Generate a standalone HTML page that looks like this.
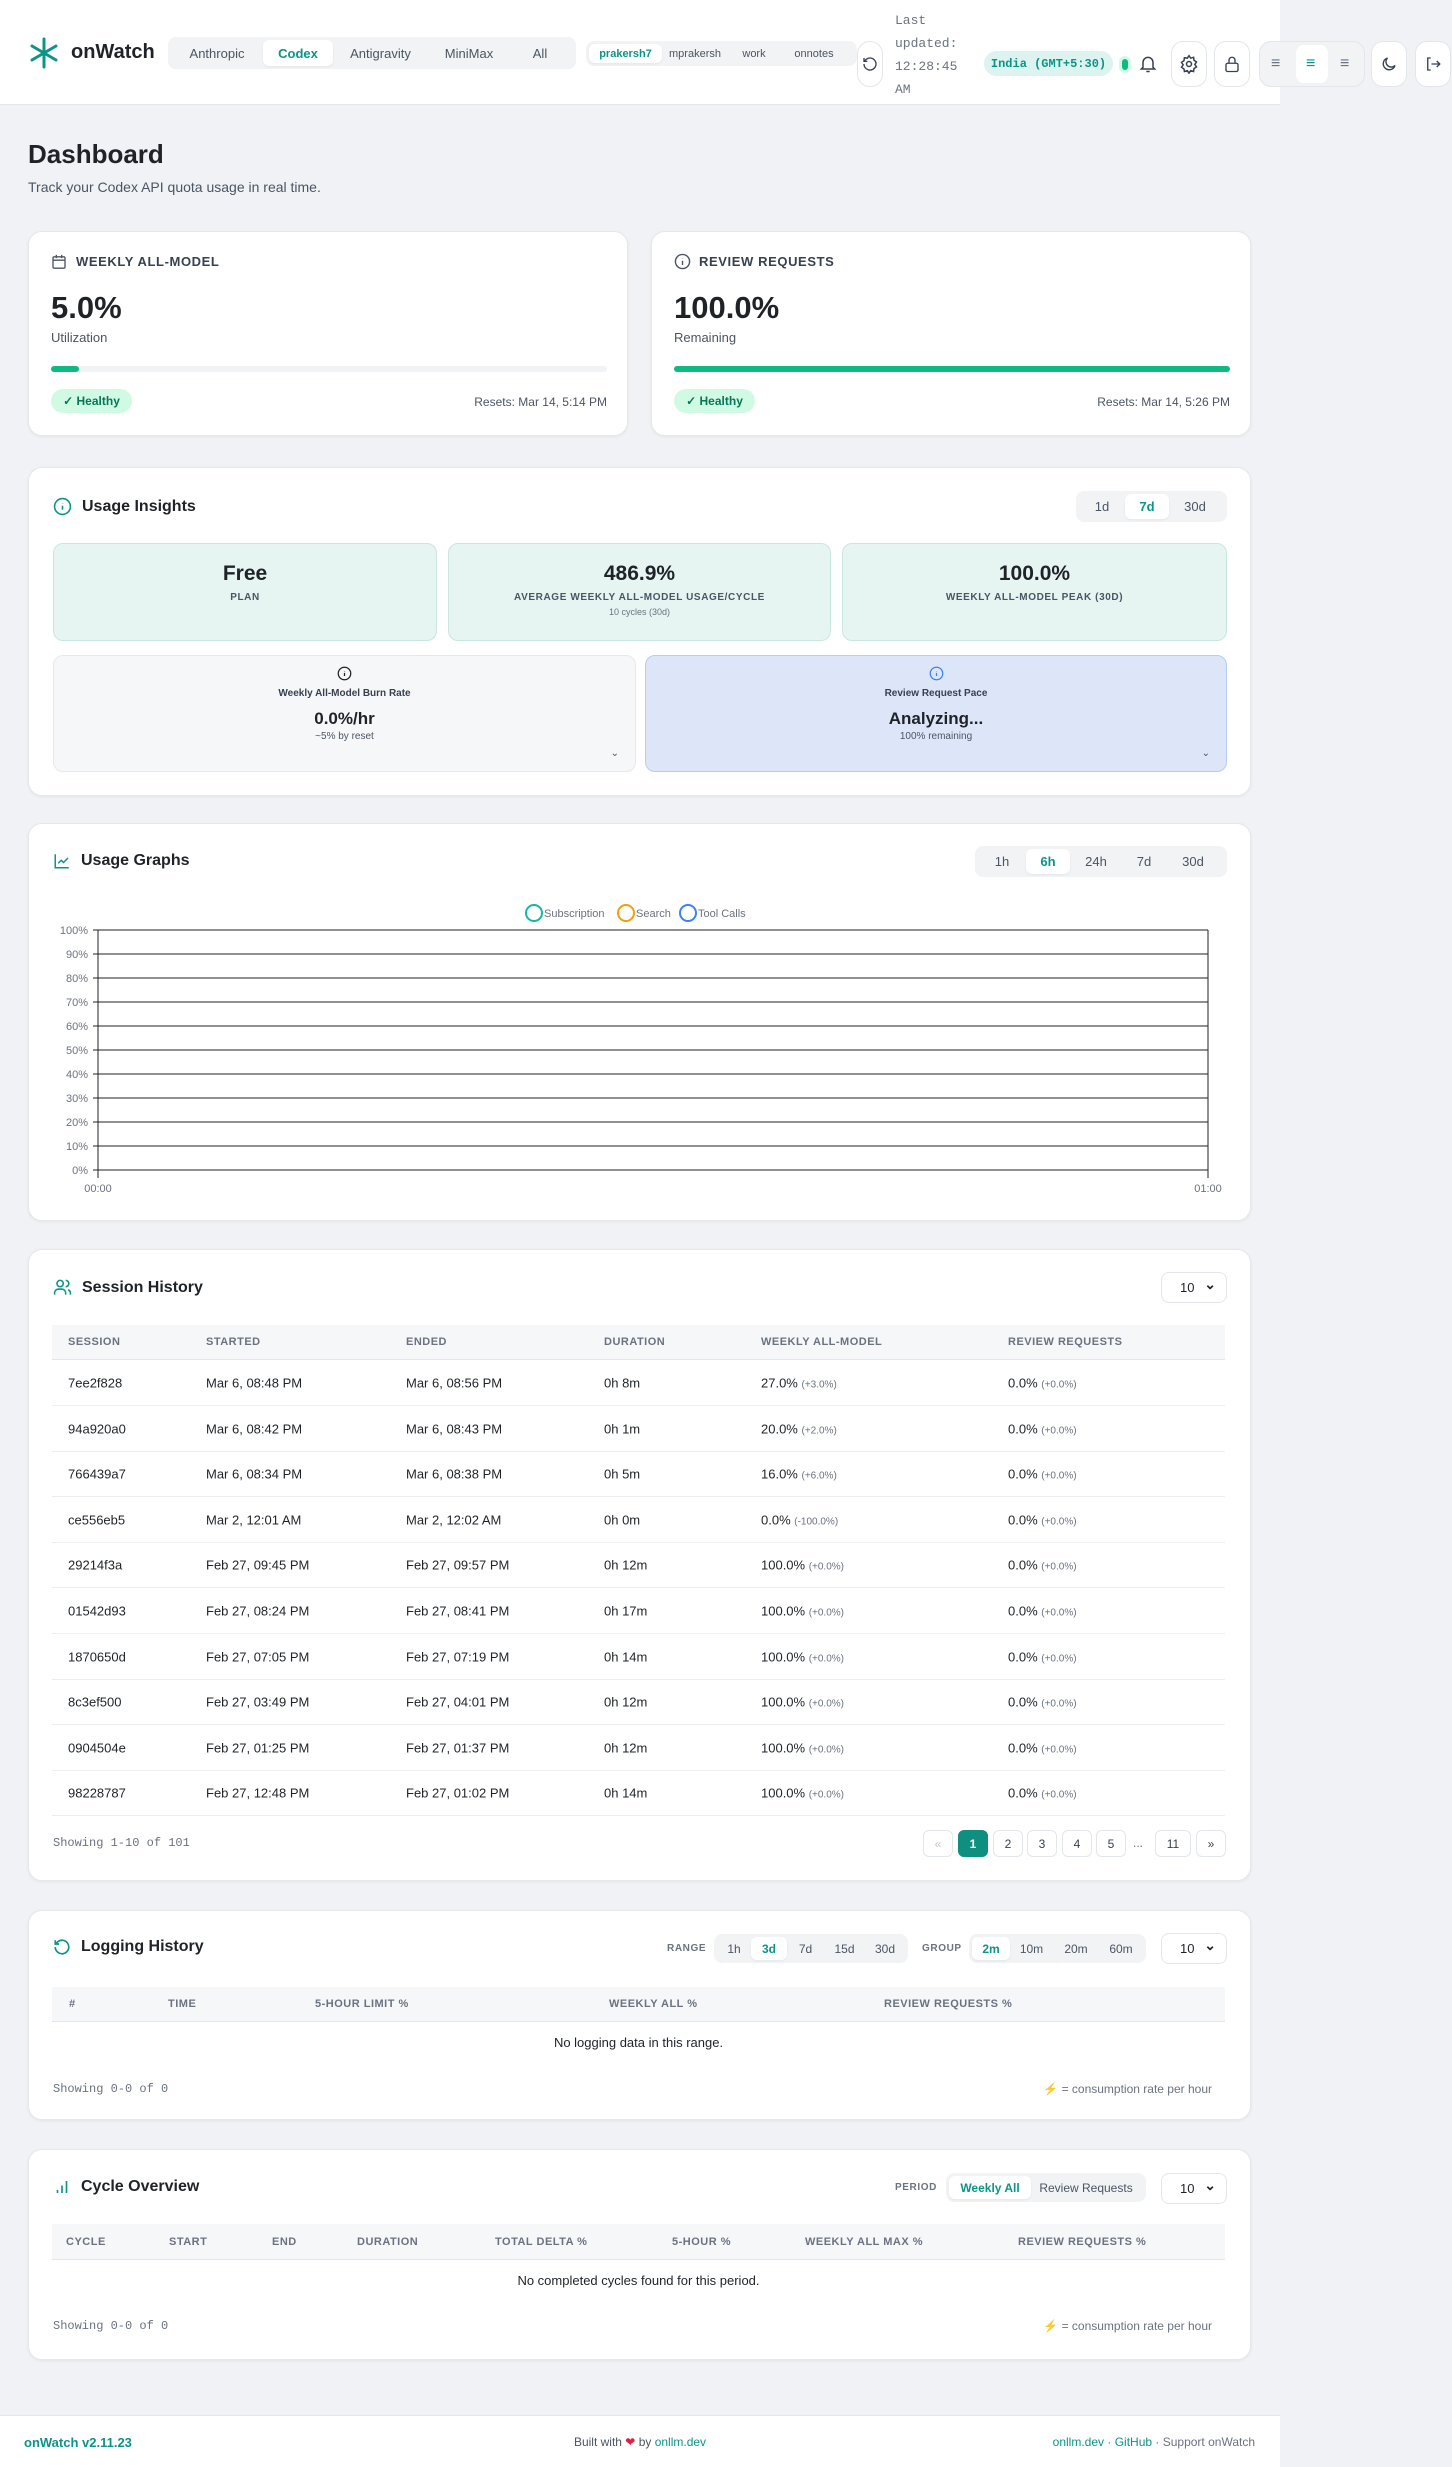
<!DOCTYPE html>
<html><head><meta charset="utf-8">
<style>
*{box-sizing:border-box;margin:0;padding:0}
html,body{width:1452px;height:2467px;background:#f0f2f5;font-family:"Liberation Sans",sans-serif;color:#1f2328;overflow:hidden}
.a{position:absolute}
.hdr{position:absolute;left:0;top:0;width:1280px;height:105px;background:#fff;border-bottom:1px solid #e3e6ea}
.card{position:absolute;background:#fff;border:1px solid #e6e8eb;border-radius:14px;box-shadow:0 1px 3px rgba(0,0,0,.06)}
.seg{position:absolute;background:#f1f3f5;border-radius:8px;display:flex;align-items:center;padding:3px;gap:0}
.seg span{display:flex;align-items:center;justify-content:center;height:100%;border-radius:6px;color:#4b5563;font-size:13px}
.seg span.on{background:#fff;color:#0d9488;font-weight:bold;box-shadow:0 1px 2px rgba(0,0,0,.06)}
.ib{position:absolute;top:41px;height:46px;width:36px;border:1px solid #e3e6ea;border-radius:12px;background:#fff;display:flex;align-items:center;justify-content:center}
.ctitle{position:absolute;font-size:16px;font-weight:bold;color:#1f2328;display:flex;align-items:center;gap:10px}
.th{position:absolute;background:#f6f7f9;border-bottom:1px solid #e3e6ea;font-size:11px;font-weight:bold;color:#6b7280;letter-spacing:.5px}
.th span{position:absolute;top:50%;transform:translateY(-50%)}
.row{position:absolute;left:52px;width:1173px;height:46px;border-bottom:1px solid #eceef1;font-size:13px;color:#1f2328}
.row span{position:absolute;top:50%;transform:translateY(-50%)}
.row small{font-size:10px;color:#6b7280}
.pg{position:absolute;top:1830px;height:27px;border:1px solid #e3e6ea;border-radius:6px;background:#fff;font-size:12px;display:flex;align-items:center;justify-content:center;color:#374151}
.mono{font-family:"Liberation Mono",monospace}
.sel{position:absolute;width:66px;height:31px;border:1px solid #e3e6ea;border-radius:8px;background:#fff;font-size:13px;display:flex;align-items:center;padding-left:18px}
.sel:after{content:"⌄";position:absolute;right:10px;top:3px;font-size:14px;font-weight:bold}
.lbl{font-size:10px;font-weight:bold;color:#6b7280;letter-spacing:.6px;position:absolute}
</style></head><body>

<div class="hdr"></div>
<svg class="a" style="left:28px;top:37px" width="32" height="32" viewBox="0 0 32 32"><g stroke="#0d9488" stroke-width="3" stroke-linecap="round"><line x1="16" y1="2" x2="16" y2="30"/><line x1="4" y1="9" x2="28" y2="23"/><line x1="4" y1="23" x2="28" y2="9"/></g></svg>
<div class="a" style="left:71px;top:41px;font-size:20px;font-weight:bold;color:#1f2328">onWatch</div>

<div class="seg" style="left:168px;top:37px;width:408px;height:32px">
<span style="width:92px">Anthropic</span><span class="on" style="width:70px">Codex</span><span style="width:95px">Antigravity</span><span style="width:82px">MiniMax</span><span style="width:60px">All</span></div>
<div class="seg" style="left:586px;top:41px;width:271px;height:25px">
<span class="on" style="width:73px;font-size:11px">prakersh7</span><span style="width:66px;font-size:11px">mprakersh</span><span style="width:52px;font-size:11px">work</span><span style="width:68px;font-size:11px">onnotes</span></div>

<div class="ib" style="left:857px;width:26px;border-radius:13px"><svg width="16" height="16" viewBox="0 0 24 24" fill="none" stroke="#374151" stroke-width="2"><path d="M3 12a9 9 0 1 0 3-6.7L3 8"/><path d="M3 3v5h5"/></svg></div>
<div class="a mono" style="left:895px;top:9px;font-size:13px;line-height:23px;color:#6b7280">Last<br>updated:<br>12:28:45<br>AM</div>
<div class="a mono" style="left:984px;top:51px;width:129px;height:25px;border-radius:13px;background:#ddf3ef;color:#0d9488;font-size:12px;font-weight:bold;display:flex;align-items:center;justify-content:center">India (GMT+5:30)</div>
<div class="a" style="left:1122px;top:59px;width:6px;height:11px;border-radius:3px;background:#10b981;box-shadow:0 0 0 3px #d1fae5"></div>
<svg class="a" style="left:1138px;top:53px" width="20" height="22" viewBox="0 0 24 24" fill="none" stroke="#374151" stroke-width="1.8"><path d="M6 16V10a6 6 0 0 1 12 0v6l2 2H4z"/><path d="M10 21h4"/></svg>
<div class="ib" style="left:1171px"><svg width="20" height="20" viewBox="0 0 24 24" fill="none" stroke="#374151" stroke-width="1.8"><circle cx="12" cy="12" r="3"/><path d="M12 2l2 3 3.5-1 .5 3.5 3 2-2 3 2 3-3 2-.5 3.5-3.5-1-2 3-2-3-3.5 1L6 18l-3-2 2-3-2-3 3-2 .5-3.5L10 5z"/></svg></div>
<div class="ib" style="left:1214px"><svg width="18" height="20" viewBox="0 0 24 24" fill="none" stroke="#374151" stroke-width="1.8"><rect x="4" y="11" width="16" height="11" rx="2"/><path d="M8 11V7a4 4 0 0 1 8 0v4"/></svg></div>
<div class="a" style="left:1259px;top:41px;width:106px;height:46px;border:1px solid #e3e6ea;border-radius:12px;background:#f1f3f5"></div>
<div class="a" style="left:1296px;top:45px;width:32px;height:38px;border-radius:8px;background:#fff"></div>
<div class="a" style="left:1271px;top:55px;font-size:16px;color:#6b7280">≡</div>
<div class="a" style="left:1306px;top:55px;font-size:16px;color:#0d9488">≡</div>
<div class="a" style="left:1340px;top:55px;font-size:16px;color:#6b7280">≡</div>
<div class="ib" style="left:1371px"><svg width="18" height="18" viewBox="0 0 24 24" fill="none" stroke="#374151" stroke-width="1.8"><path d="M20 14A8 8 0 1 1 10 4a6 6 0 0 0 10 10z"/></svg></div>
<div class="ib" style="left:1415px"><svg width="18" height="18" viewBox="0 0 24 24" fill="none" stroke="#374151" stroke-width="1.8"><path d="M9 4H5v16h4"/><path d="M10 12h11M17 8l4 4-4 4"/></svg></div>

<div class="a" style="left:28px;top:139px;font-size:26px;font-weight:bold">Dashboard</div>
<div class="a" style="left:28px;top:179px;font-size:14px;color:#4b5563">Track your Codex API quota usage in real time.</div>

<div class="card" style="left:28px;top:231px;width:600px;height:205px"></div>
<svg class="a" style="left:51px;top:253px" width="16" height="17" viewBox="0 0 24 24" fill="none" stroke="#4b5563" stroke-width="2"><rect x="3" y="5" width="18" height="17" rx="2"/><path d="M3 10h18M8 2v5M16 2v5"/></svg>
<div class="a" style="left:76px;top:254px;font-size:13px;font-weight:bold;color:#374151;letter-spacing:.6px">WEEKLY ALL-MODEL</div>
<div class="a" style="left:51px;top:290px;font-size:31px;font-weight:bold">5.0%</div>
<div class="a" style="left:51px;top:330px;font-size:13px;color:#4b5563">Utilization</div>
<div class="a" style="left:51px;top:366px;width:556px;height:6px;border-radius:3px;background:#f1f3f5"></div>
<div class="a" style="left:51px;top:366px;width:28px;height:6px;border-radius:3px;background:#10b981"></div>
<div class="a" style="left:51px;top:389px;width:81px;height:24px;border-radius:12px;background:#d1fae5;color:#047857;font-size:12px;font-weight:bold;display:flex;align-items:center;justify-content:center">✓ Healthy</div>
<div class="a" style="left:400px;top:395px;width:207px;text-align:right;font-size:12px;color:#4b5563">Resets: Mar 14, 5:14 PM</div>

<div class="card" style="left:651px;top:231px;width:600px;height:205px"></div>
<svg class="a" style="left:674px;top:253px" width="17" height="17" viewBox="0 0 24 24" fill="none" stroke="#4b5563" stroke-width="2"><circle cx="12" cy="12" r="10"/><path d="M12 11v6M12 7.5v.5"/></svg>
<div class="a" style="left:699px;top:254px;font-size:13px;font-weight:bold;color:#374151;letter-spacing:.6px">REVIEW REQUESTS</div>
<div class="a" style="left:674px;top:290px;font-size:31px;font-weight:bold">100.0%</div>
<div class="a" style="left:674px;top:330px;font-size:13px;color:#4b5563">Remaining</div>
<div class="a" style="left:674px;top:366px;width:556px;height:6px;border-radius:3px;background:#10b981"></div>
<div class="a" style="left:674px;top:389px;width:81px;height:24px;border-radius:12px;background:#d1fae5;color:#047857;font-size:12px;font-weight:bold;display:flex;align-items:center;justify-content:center">✓ Healthy</div>
<div class="a" style="left:1023px;top:395px;width:207px;text-align:right;font-size:12px;color:#4b5563">Resets: Mar 14, 5:26 PM</div>

<div class="card" style="left:28px;top:467px;width:1223px;height:329px"></div>
<div class="ctitle" style="left:53px;top:497px"><svg width="19" height="19" viewBox="0 0 24 24" fill="none" stroke="#0d9488" stroke-width="2"><circle cx="12" cy="12" r="10"/><path d="M12 11v5M12 8v.5"/></svg>Usage Insights</div>
<div class="seg" style="left:1076px;top:491px;width:151px;height:31px"><span style="width:46px">1d</span><span class="on" style="width:44px">7d</span><span style="width:52px">30d</span></div>
<div class="a" style="left:53px;top:543px;width:384px;height:98px;border:1px solid #c9e7e1;background:#e6f4f2;border-radius:10px;text-align:center"><div style="margin-top:18px;font-size:21px;font-weight:bold">Free</div><div style="margin-top:6px;font-size:10px;font-weight:bold;color:#4b5563;letter-spacing:.6px">PLAN</div></div>
<div class="a" style="left:448px;top:543px;width:383px;height:98px;border:1px solid #c9e7e1;background:#e6f4f2;border-radius:10px;text-align:center"><div style="margin-top:18px;font-size:21px;font-weight:bold">486.9%</div><div style="margin-top:6px;font-size:10px;font-weight:bold;color:#4b5563;letter-spacing:.6px">AVERAGE WEEKLY ALL-MODEL USAGE/CYCLE</div><div style="margin-top:4px;font-size:9px;color:#6b7280">10 cycles (30d)</div></div>
<div class="a" style="left:842px;top:543px;width:385px;height:98px;border:1px solid #c9e7e1;background:#e6f4f2;border-radius:10px;text-align:center"><div style="margin-top:18px;font-size:21px;font-weight:bold">100.0%</div><div style="margin-top:6px;font-size:10px;font-weight:bold;color:#4b5563;letter-spacing:.6px">WEEKLY ALL-MODEL PEAK (30D)</div></div>
<div class="a" style="left:53px;top:655px;width:583px;height:117px;border:1px solid #e6e8eb;background:#f6f7f9;border-radius:10px;text-align:center">
<svg style="margin-top:10px" width="15" height="15" viewBox="0 0 24 24" fill="none" stroke="#1f2328" stroke-width="2"><circle cx="12" cy="12" r="10"/><path d="M12 11v5M12 8v.5"/></svg>
<div style="margin-top:2px;font-size:10px;font-weight:bold;color:#374151">Weekly All-Model Burn Rate</div>
<div style="margin-top:10px;font-size:17px;font-weight:bold">0.0%/hr</div>
<div style="margin-top:2px;font-size:10px;color:#4b5563">~5% by reset</div>
<div style="position:absolute;right:16px;bottom:12px;font-size:10px;color:#4b5563">⌄</div></div>
<div class="a" style="left:645px;top:655px;width:582px;height:117px;border:1px solid #b7cdf3;background:#dde6f8;border-radius:10px;text-align:center">
<svg style="margin-top:10px" width="15" height="15" viewBox="0 0 24 24" fill="none" stroke="#3b82f6" stroke-width="2"><circle cx="12" cy="12" r="10"/><path d="M12 11v5M12 8v.5"/></svg>
<div style="margin-top:2px;font-size:10px;font-weight:bold;color:#374151">Review Request Pace</div>
<div style="margin-top:10px;font-size:17px;font-weight:bold">Analyzing...</div>
<div style="margin-top:2px;font-size:10px;color:#4b5563">100% remaining</div>
<div style="position:absolute;right:16px;bottom:12px;font-size:10px;color:#4b5563">⌄</div></div>

<div class="card" style="left:28px;top:823px;width:1223px;height:398px"></div>
<div class="ctitle" style="left:53px;top:852px"><svg width="18" height="18" viewBox="0 0 24 24" fill="none" stroke="#0d9488" stroke-width="2"><path d="M3 3v18h18"/><path d="M7 15l4-4 3 3 6-6"/></svg>Usage Graphs</div>
<div class="seg" style="left:975px;top:846px;width:252px;height:31px"><span style="width:48px">1h</span><span class="on" style="width:44px">6h</span><span style="width:52px">24h</span><span style="width:44px">7d</span><span style="width:54px">30d</span></div>
<svg class="a" style="left:28px;top:890px" width="1223" height="320" font-family="Liberation Sans, sans-serif" font-size="11" fill="#6b7280">
<circle cx="506" cy="23" r="8" fill="none" stroke="#14b8a6" stroke-width="2"/><text x="516" y="27">Subscription</text>
<circle cx="598" cy="23" r="8" fill="none" stroke="#f59e0b" stroke-width="2"/><text x="608" y="27">Search</text>
<circle cx="660" cy="23" r="8" fill="none" stroke="#3b82f6" stroke-width="2"/><text x="670" y="27">Tool Calls</text>
<g stroke="#222" stroke-width="1">
<line x1="65" y1="40" x2="1180" y2="40"/><line x1="65" y1="64" x2="1180" y2="64"/><line x1="65" y1="88" x2="1180" y2="88"/><line x1="65" y1="112" x2="1180" y2="112"/><line x1="65" y1="136" x2="1180" y2="136"/><line x1="65" y1="160" x2="1180" y2="160"/><line x1="65" y1="184" x2="1180" y2="184"/><line x1="65" y1="208" x2="1180" y2="208"/><line x1="65" y1="232" x2="1180" y2="232"/><line x1="65" y1="256" x2="1180" y2="256"/><line x1="65" y1="280" x2="1180" y2="280"/>
<line x1="70" y1="40" x2="70" y2="288"/><line x1="1180" y1="40" x2="1180" y2="288"/></g>
<g text-anchor="end"><text x="60" y="44">100%</text><text x="60" y="68">90%</text><text x="60" y="92">80%</text><text x="60" y="116">70%</text><text x="60" y="140">60%</text><text x="60" y="164">50%</text><text x="60" y="188">40%</text><text x="60" y="212">30%</text><text x="60" y="236">20%</text><text x="60" y="260">10%</text><text x="60" y="284">0%</text></g>
<text x="70" y="302" text-anchor="middle">00:00</text><text x="1180" y="302" text-anchor="middle">01:00</text>
</svg>

<div class="card" style="left:28px;top:1249px;width:1223px;height:632px"></div>
<div class="ctitle" style="left:53px;top:1278px"><svg width="19" height="19" viewBox="0 0 24 24" fill="none" stroke="#0d9488" stroke-width="2"><circle cx="9" cy="7" r="4"/><path d="M2 21v-2a5 5 0 0 1 5-5h4a5 5 0 0 1 5 5v2M16 3a4 4 0 0 1 0 8M22 21v-2a4 4 0 0 0-3-4"/></svg>Session History</div>
<div class="sel" style="left:1161px;top:1272px">10</div>
<div class="th" style="left:52px;top:1325px;width:1173px;height:35px"><span style="left:16px">SESSION</span><span style="left:154px">STARTED</span><span style="left:354px">ENDED</span><span style="left:552px">DURATION</span><span style="left:709px">WEEKLY ALL-MODEL</span><span style="left:956px">REVIEW REQUESTS</span></div>
<div class="row" style="top:1360px"><span style="left:16px">7ee2f828</span><span style="left:154px">Mar 6, 08:48 PM</span><span style="left:354px">Mar 6, 08:56 PM</span><span style="left:552px">0h 8m</span><span style="left:709px">27.0% <small>(+3.0%)</small></span><span style="left:956px">0.0% <small>(+0.0%)</small></span></div>
<div class="row" style="top:1406px"><span style="left:16px">94a920a0</span><span style="left:154px">Mar 6, 08:42 PM</span><span style="left:354px">Mar 6, 08:43 PM</span><span style="left:552px">0h 1m</span><span style="left:709px">20.0% <small>(+2.0%)</small></span><span style="left:956px">0.0% <small>(+0.0%)</small></span></div>
<div class="row" style="top:1451px"><span style="left:16px">766439a7</span><span style="left:154px">Mar 6, 08:34 PM</span><span style="left:354px">Mar 6, 08:38 PM</span><span style="left:552px">0h 5m</span><span style="left:709px">16.0% <small>(+6.0%)</small></span><span style="left:956px">0.0% <small>(+0.0%)</small></span></div>
<div class="row" style="top:1497px"><span style="left:16px">ce556eb5</span><span style="left:154px">Mar 2, 12:01 AM</span><span style="left:354px">Mar 2, 12:02 AM</span><span style="left:552px">0h 0m</span><span style="left:709px">0.0% <small>(-100.0%)</small></span><span style="left:956px">0.0% <small>(+0.0%)</small></span></div>
<div class="row" style="top:1542px"><span style="left:16px">29214f3a</span><span style="left:154px">Feb 27, 09:45 PM</span><span style="left:354px">Feb 27, 09:57 PM</span><span style="left:552px">0h 12m</span><span style="left:709px">100.0% <small>(+0.0%)</small></span><span style="left:956px">0.0% <small>(+0.0%)</small></span></div>
<div class="row" style="top:1588px"><span style="left:16px">01542d93</span><span style="left:154px">Feb 27, 08:24 PM</span><span style="left:354px">Feb 27, 08:41 PM</span><span style="left:552px">0h 17m</span><span style="left:709px">100.0% <small>(+0.0%)</small></span><span style="left:956px">0.0% <small>(+0.0%)</small></span></div>
<div class="row" style="top:1634px"><span style="left:16px">1870650d</span><span style="left:154px">Feb 27, 07:05 PM</span><span style="left:354px">Feb 27, 07:19 PM</span><span style="left:552px">0h 14m</span><span style="left:709px">100.0% <small>(+0.0%)</small></span><span style="left:956px">0.0% <small>(+0.0%)</small></span></div>
<div class="row" style="top:1679px"><span style="left:16px">8c3ef500</span><span style="left:154px">Feb 27, 03:49 PM</span><span style="left:354px">Feb 27, 04:01 PM</span><span style="left:552px">0h 12m</span><span style="left:709px">100.0% <small>(+0.0%)</small></span><span style="left:956px">0.0% <small>(+0.0%)</small></span></div>
<div class="row" style="top:1725px"><span style="left:16px">0904504e</span><span style="left:154px">Feb 27, 01:25 PM</span><span style="left:354px">Feb 27, 01:37 PM</span><span style="left:552px">0h 12m</span><span style="left:709px">100.0% <small>(+0.0%)</small></span><span style="left:956px">0.0% <small>(+0.0%)</small></span></div>
<div class="row" style="top:1770px"><span style="left:16px">98228787</span><span style="left:154px">Feb 27, 12:48 PM</span><span style="left:354px">Feb 27, 01:02 PM</span><span style="left:552px">0h 14m</span><span style="left:709px">100.0% <small>(+0.0%)</small></span><span style="left:956px">0.0% <small>(+0.0%)</small></span></div>
<div class="a mono" style="left:53px;top:1836px;font-size:12px;color:#6b7280">Showing 1-10 of 101</div>
<div class="pg" style="left:923px;width:30px;color:#c0c4ca">«</div>
<div class="pg" style="left:958px;width:30px;background:#0f8f7f;border-color:#0f8f7f;color:#fff;font-weight:bold">1</div>
<div class="pg" style="left:993px;width:30px">2</div>
<div class="pg" style="left:1027px;width:30px">3</div>
<div class="pg" style="left:1062px;width:30px">4</div>
<div class="pg" style="left:1096px;width:30px">5</div>
<div class="a" style="left:1133px;top:1836px;font-size:12px;color:#6b7280">...</div>
<div class="pg" style="left:1155px;width:36px">11</div>
<div class="pg" style="left:1196px;width:30px">»</div>

<div class="card" style="left:28px;top:1910px;width:1223px;height:210px"></div>
<div class="ctitle" style="left:53px;top:1938px"><svg width="18" height="18" viewBox="0 0 24 24" fill="none" stroke="#0d9488" stroke-width="2.2"><path d="M3 12a9 9 0 1 0 3-6.7L3 8"/><path d="M3 3v5h5"/></svg>Logging History</div>
<div class="lbl" style="left:667px;top:1943px">RANGE</div>
<div class="seg" style="left:714px;top:1934px;width:194px;height:29px"><span style="width:34px;font-size:12px">1h</span><span class="on" style="width:36px;font-size:12px">3d</span><span style="width:37px;font-size:12px">7d</span><span style="width:41px;font-size:12px">15d</span><span style="width:40px;font-size:12px">30d</span></div>
<div class="lbl" style="left:922px;top:1943px">GROUP</div>
<div class="seg" style="left:969px;top:1934px;width:177px;height:29px"><span class="on" style="width:38px;font-size:12px">2m</span><span style="width:43px;font-size:12px">10m</span><span style="width:46px;font-size:12px">20m</span><span style="width:44px;font-size:12px">60m</span></div>
<div class="sel" style="left:1161px;top:1933px">10</div>
<div class="th" style="left:52px;top:1987px;width:1173px;height:35px"><span style="left:17px">#</span><span style="left:116px">TIME</span><span style="left:263px">5-HOUR LIMIT %</span><span style="left:557px">WEEKLY ALL %</span><span style="left:832px">REVIEW REQUESTS %</span></div>
<div class="a" style="left:52px;top:2035px;width:1173px;text-align:center;font-size:13px">No logging data in this range.</div>
<div class="a mono" style="left:53px;top:2082px;font-size:12px;color:#6b7280">Showing 0-0 of 0</div>
<div class="a" style="left:1000px;top:2082px;width:212px;text-align:right;font-size:12px;color:#6b7280"><span style="color:#f59e0b">⚡</span> = consumption rate per hour</div>

<div class="card" style="left:28px;top:2149px;width:1223px;height:211px"></div>
<div class="ctitle" style="left:53px;top:2178px"><svg width="18" height="18" viewBox="0 0 24 24" fill="none" stroke="#0d9488" stroke-width="2.2"><path d="M6 20v-4M12 20V10M18 20V4"/></svg>Cycle Overview</div>
<div class="lbl" style="left:895px;top:2182px">PERIOD</div>
<div class="seg" style="left:946px;top:2173px;width:200px;height:29px"><span class="on" style="width:82px;font-size:12px">Weekly All</span><span style="width:110px;font-size:12px">Review Requests</span></div>
<div class="sel" style="left:1161px;top:2173px">10</div>
<div class="th" style="left:52px;top:2224px;width:1173px;height:36px"><span style="left:14px">CYCLE</span><span style="left:117px">START</span><span style="left:220px">END</span><span style="left:305px">DURATION</span><span style="left:443px">TOTAL DELTA %</span><span style="left:620px">5-HOUR %</span><span style="left:753px">WEEKLY ALL MAX %</span><span style="left:966px">REVIEW REQUESTS %</span></div>
<div class="a" style="left:52px;top:2273px;width:1173px;text-align:center;font-size:13px">No completed cycles found for this period.</div>
<div class="a mono" style="left:53px;top:2319px;font-size:12px;color:#6b7280">Showing 0-0 of 0</div>
<div class="a" style="left:1000px;top:2319px;width:212px;text-align:right;font-size:12px;color:#6b7280"><span style="color:#f59e0b">⚡</span> = consumption rate per hour</div>

<div class="a" style="left:0;top:2415px;width:1280px;height:52px;background:#fff;border-top:1px solid #e3e6ea"></div>
<div class="a" style="left:24px;top:2435px;font-size:13px;font-weight:bold;color:#0d9488">onWatch v2.11.23</div>
<div class="a" style="left:440px;top:2435px;width:400px;text-align:center;font-size:12px;color:#4b5563">Built with <span style="color:#e11d48">❤</span> by <span style="color:#0d9488">onllm.dev</span></div>
<div class="a" style="left:960px;top:2435px;width:295px;text-align:right;font-size:12px;color:#6b7280"><span style="color:#0d9488">onllm.dev</span> · <span style="color:#0d9488">GitHub</span> · Support onWatch</div>
</body></html>
